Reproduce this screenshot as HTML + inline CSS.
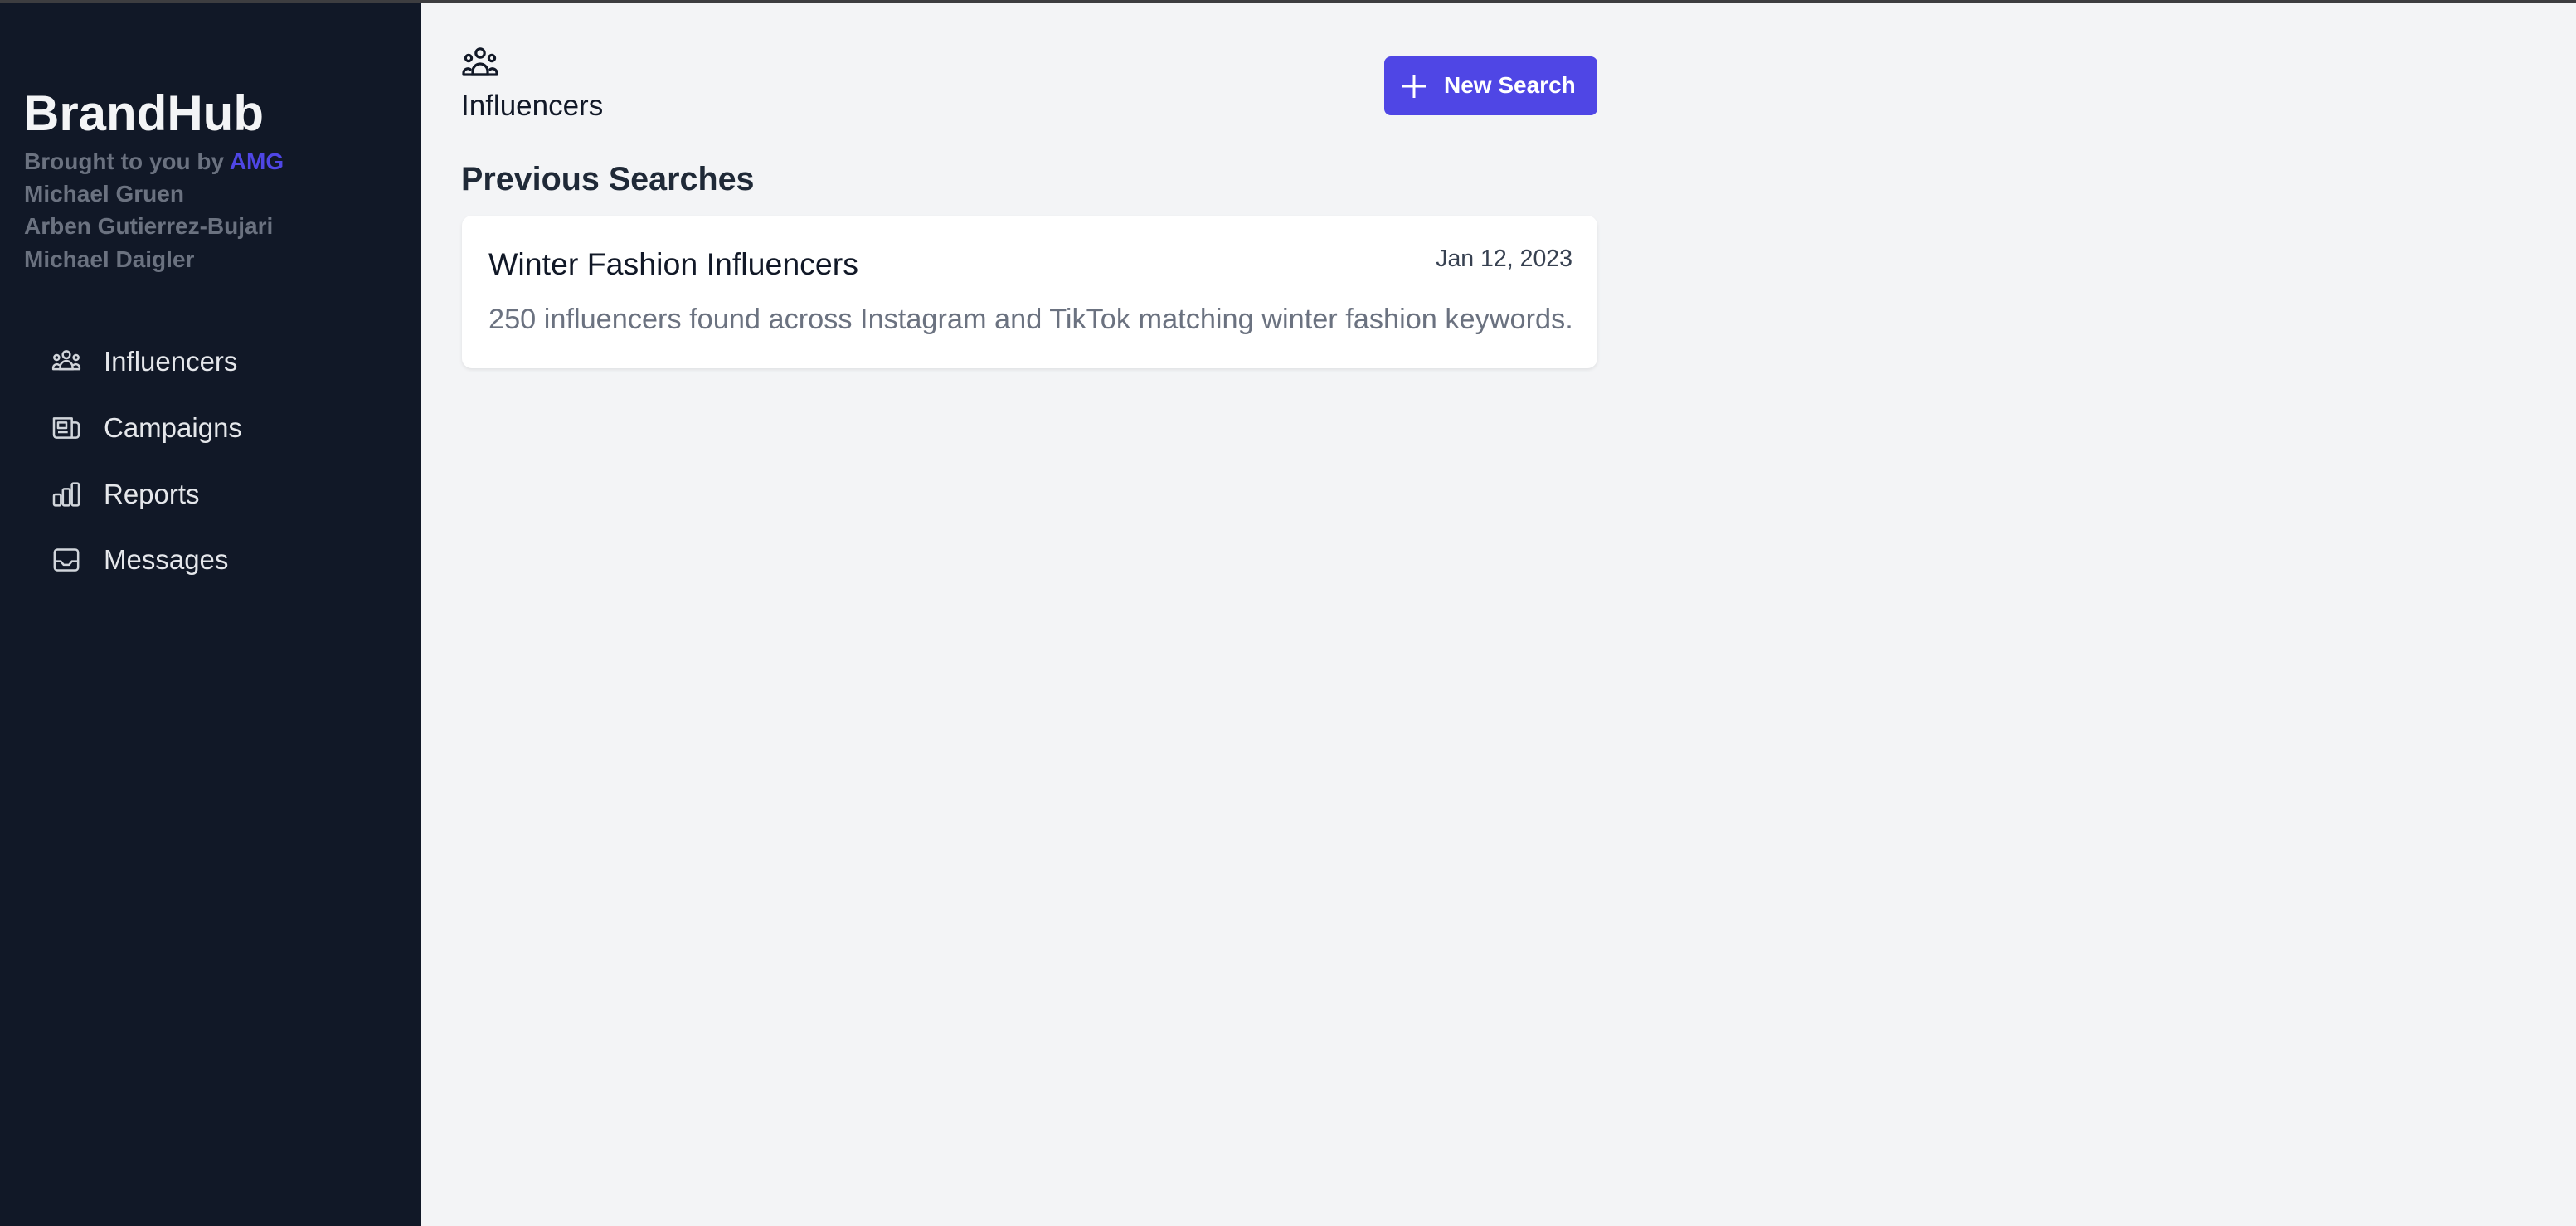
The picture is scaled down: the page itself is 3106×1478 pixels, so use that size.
<!DOCTYPE html>
<html><head><meta charset="utf-8"><style>
*{margin:0;padding:0;box-sizing:border-box}
body{width:3106px;height:1478px;overflow:hidden;background:#f3f4f6;font-family:"Liberation Sans",sans-serif;position:relative}
.top{position:absolute;left:0;top:0;width:3106px;height:4px;background:#3d3d40}
.side{position:absolute;left:0;top:4px;width:508px;height:1474px;background:#111827}
.a{position:absolute;white-space:nowrap}
.sub{color:#6b7280;font-weight:bold;font-size:28px;left:29px}
.nav{color:#e5e7eb;font-size:33px;left:125px}
.ic{position:absolute;left:60px;width:40px;height:40px}
</style></head><body>
<div class="top"></div>
<div class="side">
  <div class="a" style="left:28px;top:98px;font-size:60px;font-weight:bold;color:#f3f4f6">BrandHub</div>
  <div class="a sub" style="top:175px">Brought to you by <span style="color:#4f46e5">AMG</span></div>
  <div class="a sub" style="top:214px">Michael Gruen</div>
  <div class="a sub" style="top:253px">Arben Gutierrez-Bujari</div>
  <div class="a sub" style="top:293px">Michael Daigler</div>

  <svg class="ic" style="top:412px" viewBox="0 0 24 24" fill="none" stroke="#d1d5db" stroke-width="1.5" stroke-linecap="round"><circle cx="12" cy="7" r="2.6"/><circle cx="5" cy="9" r="1.8"/><circle cx="19" cy="9" r="1.8"/><path d="M7.5 17.5v-1.5a4.5 4.5 0 0 1 9 0v1.5z"/><path d="M2.5 17.5v-1a2.6 2.6 0 0 1 4-2.2M21.5 17.5v-1a2.6 2.6 0 0 0-4-2.2M2.5 17.5h19"/></svg>
  <div class="a nav" style="top:413px">Influencers</div>
  <svg class="ic" style="top:492px" viewBox="0 0 24 24" fill="none" stroke="#d1d5db" stroke-width="1.5" stroke-linejoin="round"><path d="M3 5h13v14H5a2 2 0 0 1-2-2zM16 8h3a2 2 0 0 1 2 2v7a2 2 0 0 1-2 2h-3"/><path d="M6 8h6v4H6zM6 15h7"/></svg>
  <div class="a nav" style="top:493px">Campaigns</div>
  <svg class="ic" style="top:572px" viewBox="0 0 24 24" fill="none" stroke="#d1d5db" stroke-width="1.5" stroke-linejoin="round"><rect x="3" y="12" width="5" height="8" rx="1"/><rect x="9.5" y="8" width="5" height="12" rx="1"/><rect x="16" y="4" width="5" height="16" rx="1"/></svg>
  <div class="a nav" style="top:573px">Reports</div>
  <svg class="ic" style="top:651px" viewBox="0 0 24 24" fill="none" stroke="#d1d5db" stroke-width="1.5" stroke-linejoin="round"><rect x="3.5" y="4.5" width="17" height="15" rx="2"/><path d="M3.5 13h4.5l2 2.5h4l2-2.5h4.5"/></svg>
  <div class="a nav" style="top:652px">Messages</div>
</div>

<svg style="position:absolute;left:555px;top:56px;width:48px;height:40px" viewBox="0 0 24 20" fill="none" stroke="#111827" stroke-width="1.6" stroke-linecap="round"><circle cx="12" cy="4" r="2.6"/><circle cx="5" cy="7" r="1.8"/><circle cx="19" cy="7" r="1.8"/><path d="M7.5 17v-2a4.5 4.5 0 0 1 9 0v2z"/><path d="M2 17v-1a2.6 2.6 0 0 1 4-2.2M22 17v-1a2.6 2.6 0 0 0-4-2.2M2 17h20"/></svg>
<div class="a" style="left:556px;top:108px;font-size:35px;color:#111827">Influencers</div>

<div style="position:absolute;left:1669px;top:68px;width:257px;height:71px;background:#4f46e5;border-radius:8px"></div>
<svg style="position:absolute;left:1689px;top:89px;width:32px;height:30px" viewBox="0 0 32 30" stroke="#fff" stroke-width="3"><path d="M16 1v28M2 15h28"/></svg>
<div class="a" style="left:1741px;top:87px;font-size:28px;font-weight:bold;color:#fff">New Search</div>

<div class="a" style="left:556px;top:194px;font-size:39.5px;font-weight:bold;color:#1f2937">Previous Searches</div>

<div style="position:absolute;left:557px;top:260px;width:1369px;height:184px;background:#fff;border-radius:12px;box-shadow:0 2px 4px rgba(0,0,0,0.08)"></div>
<div class="a" style="left:589px;top:297px;font-size:37.5px;color:#111827">Winter Fashion Influencers</div>
<div class="a" style="right:1210px;top:296px;font-size:28.5px;color:#374151">Jan 12, 2023</div>
<div class="a" style="left:589px;top:366px;font-size:34.3px;color:#6b7280">250 influencers found across Instagram and TikTok matching winter fashion keywords.</div>
</body></html>
